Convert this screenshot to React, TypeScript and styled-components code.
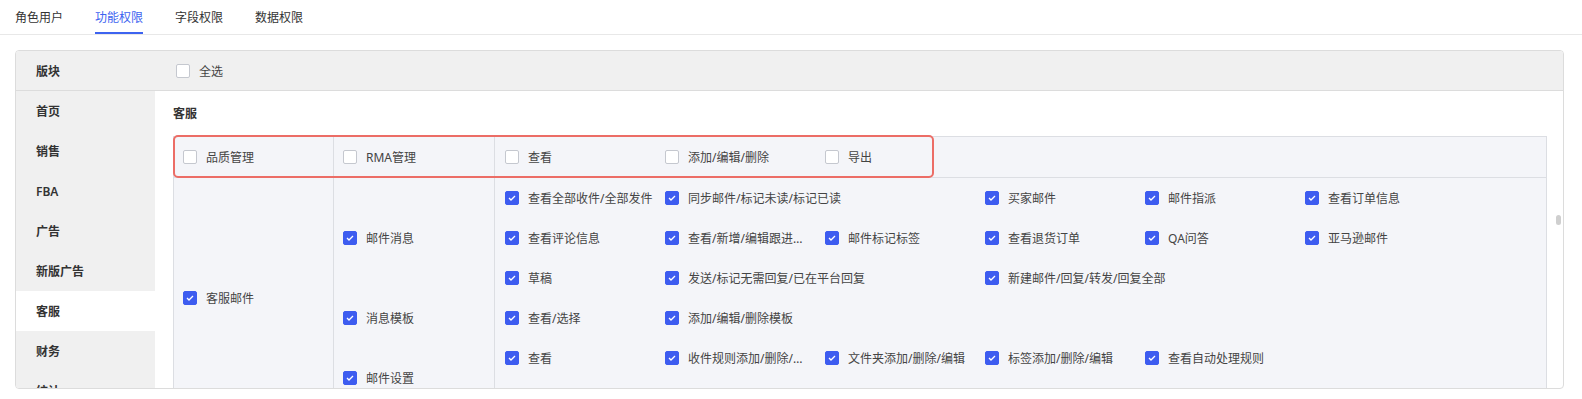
import React from 'react'
import styled, { createGlobalStyle } from 'styled-components'

const GlobalStyle = createGlobalStyle`
  html, body {
    margin: 0;
    padding: 0;
    background: #fff;
    font-family: 'Noto Sans', 'Noto Sans CJK SC', sans-serif;
    font-size: 12px;
    color: #333;
  }
`

interface Option {
  label: string
  checked?: boolean
  span?: number
  truncate?: boolean
}

interface SubGroup {
  label: string
  rows: number
  options: Option[]
}

const tabs = ['角色用户', '功能权限', '字段权限', '数据权限']

const modules = ['首页', '销售', 'FBA', '广告', '新版广告', '客服', '财务', '统计']

const headerOptions: Option[] = [
  { label: '查看' },
  { label: '添加/编辑/删除' },
  { label: '导出' },
]

const groups: SubGroup[] = [
  {
    label: '邮件消息',
    rows: 3,
    options: [
      { label: '查看全部收件/全部发件', checked: true },
      { label: '同步邮件/标记未读/标记已读', checked: true, span: 2 },
      { label: '买家邮件', checked: true },
      { label: '邮件指派', checked: true },
      { label: '查看订单信息', checked: true },
      { label: '查看评论信息', checked: true },
      { label: '查看/新增/编辑跟进记录', checked: true, truncate: true },
      { label: '邮件标记标签', checked: true },
      { label: '查看退货订单', checked: true },
      { label: 'QA问答', checked: true },
      { label: '亚马逊邮件', checked: true },
      { label: '草稿', checked: true },
      { label: '发送/标记无需回复/已在平台回复', checked: true, span: 2 },
      { label: '新建邮件/回复/转发/回复全部', checked: true, span: 2 },
    ],
  },
  {
    label: '消息模板',
    rows: 1,
    options: [
      { label: '查看/选择', checked: true },
      { label: '添加/编辑/删除模板', checked: true },
    ],
  },
  {
    label: '邮件设置',
    rows: 2,
    options: [
      { label: '查看', checked: true },
      { label: '收件规则添加/删除/编辑', checked: true, truncate: true },
      { label: '文件夹添加/删除/编辑', checked: true },
      { label: '标签添加/删除/编辑', checked: true },
      { label: '查看自动处理规则', checked: true },
    ],
  },
]

const Page = styled.div`
  height: 399px;
  overflow: hidden;
`

const TabBar = styled.nav`
  display: flex;
  gap: 32px;
  height: 34px;
  padding-left: 15px;
  border-bottom: 1px solid #e8e8e8;
`

const Tab = styled.div<{ $active?: boolean }>`
  display: flex;
  align-items: center;
  height: 34px;
  box-sizing: border-box;
  padding-top: 1px;
  color: ${({ $active }) => ($active ? '#3d63f0' : '#333')};
  border-bottom: 2px solid ${({ $active }) => ($active ? '#3d63f0' : 'transparent')};
  margin-bottom: -1px;
`

const Card = styled.section`
  margin: 15px 18px 0 15px;
  height: 339px;
  box-sizing: border-box;
  border: 1px solid #dcdcdc;
  border-radius: 4px;
  overflow: hidden;
  display: grid;
  grid-template-columns: 139px 1fr;
  grid-template-rows: 40px 1fr;
`

const HeadCell = styled.div<{ $pad: number; $bold?: boolean }>`
  display: flex;
  align-items: center;
  padding-left: ${({ $pad }) => $pad}px;
  background: #f0f0f0;
  border-bottom: 1px solid #dcdcdc;
  font-weight: ${({ $bold }) => ($bold ? 600 : 400)};
`

const Sidebar = styled.aside`
  background: #f0f0f0;
  overflow: hidden;
`

const ModuleItem = styled.div<{ $active?: boolean }>`
  display: flex;
  align-items: center;
  height: 40px;
  padding-left: 20px;
  font-weight: 600;
  color: #333;
  background: ${({ $active }) => ($active ? '#fff' : 'transparent')};
`

const Content = styled.main`
  position: relative;
  overflow: hidden;
  padding: 14px 16px 0 18px;
`

const Title = styled.div`
  line-height: 18px;
  font-weight: 600;
  color: #333;
  margin-bottom: 13px;
`

const Thumb = styled.div`
  position: absolute;
  right: 2px;
  top: 124px;
  width: 5px;
  height: 10px;
  border-radius: 3px;
  background: #cfcfcf;
`

const Table = styled.div`
  position: relative;
  border: 1px solid #dcdee3;
  background: #f4f5f9;
`

const Highlight = styled.div`
  position: absolute;
  left: -1px;
  top: -2px;
  width: 761px;
  height: 43px;
  box-sizing: border-box;
  border: 2px solid #ec6d66;
  border-radius: 5px;
  pointer-events: none;
`

const Row = styled.div<{ $head?: boolean }>`
  display: grid;
  grid-template-columns: 160px 1fr;
  border-bottom: ${({ $head }) => ($head ? '1px solid #dcdee3' : 'none')};
`

const SubRow = styled.div`
  display: grid;
  grid-template-columns: 161px 1fr;
`

const LabelCell = styled.div`
  display: flex;
  align-items: center;
  padding-left: 9px;
  border-right: 1px solid #dcdee3;
  min-height: 40px;
`

const OptionGrid = styled.div<{ $rows: number }>`
  display: grid;
  grid-template-columns: repeat(6, 160px);
  grid-template-rows: repeat(${({ $rows }) => $rows}, 40px);
  padding-left: 10px;
`

const OptionItem = styled.div<{ $span: number }>`
  grid-column: span ${({ $span }) => $span};
  display: flex;
  align-items: center;
  min-width: 0;
  padding-right: 10px;
`

const Box = styled.span<{ $checked?: boolean }>`
  flex: none;
  display: inline-flex;
  align-items: center;
  justify-content: center;
  width: 14px;
  height: 14px;
  box-sizing: border-box;
  border-radius: 2px;
  border: 1px solid ${({ $checked }) => ($checked ? '#3d5cf0' : '#c5c8cf')};
  background: ${({ $checked }) => ($checked ? '#3d5cf0' : '#fff')};
`

const Label = styled.span<{ $truncate?: boolean }>`
  margin-left: 9px;
  color: #444;
  white-space: nowrap;
  overflow: ${({ $truncate }) => ($truncate ? 'hidden' : 'visible')};
  text-overflow: ellipsis;
  max-width: ${({ $truncate }) => ($truncate ? '116px' : 'none')};
`

const Check = ({ label, checked, truncate }: Option) => (
  <>
    <Box $checked={checked}>
      {checked && (
        <svg width="8" height="6" viewBox="0 0 8 6">
          <path d="M1 3l2 2 4-4" fill="none" stroke="#fff" strokeWidth="1.3" />
        </svg>
      )}
    </Box>
    <Label $truncate={truncate}>{label}</Label>
  </>
)

const Options = ({ items, rows }: { items: Option[]; rows: number }) => (
  <OptionGrid $rows={rows}>
    {items.map((o) => (
      <OptionItem key={o.label} $span={o.span ?? 1}>
        <Check {...o} />
      </OptionItem>
    ))}
  </OptionGrid>
)

export default function App() {
  return (
    <Page>
      <GlobalStyle />
      <TabBar>
        {tabs.map((t) => (
          <Tab key={t} $active={t === '功能权限'}>
            {t}
          </Tab>
        ))}
      </TabBar>
      <Card>
        <HeadCell $pad={20} $bold>
          版块
        </HeadCell>
        <HeadCell $pad={21}>
          <Check label="全选" />
        </HeadCell>
        <Sidebar>
          {modules.map((m) => (
            <ModuleItem key={m} $active={m === '客服'}>
              {m}
            </ModuleItem>
          ))}
        </Sidebar>
        <Content>
          <Title>客服</Title>
          <Table>
            <Row $head>
              <LabelCell>
                <Check label="品质管理" />
              </LabelCell>
              <SubRow>
                <LabelCell>
                  <Check label="RMA管理" />
                </LabelCell>
                <Options items={headerOptions} rows={1} />
              </SubRow>
            </Row>
            <Row>
              <LabelCell>
                <Check label="客服邮件" checked />
              </LabelCell>
              <div>
                {groups.map((g) => (
                  <SubRow key={g.label}>
                    <LabelCell>
                      <Check label={g.label} checked />
                    </LabelCell>
                    <Options items={g.options} rows={g.rows} />
                  </SubRow>
                ))}
              </div>
            </Row>
            <Highlight />
          </Table>
          <Thumb />
        </Content>
      </Card>
    </Page>
  )
}
